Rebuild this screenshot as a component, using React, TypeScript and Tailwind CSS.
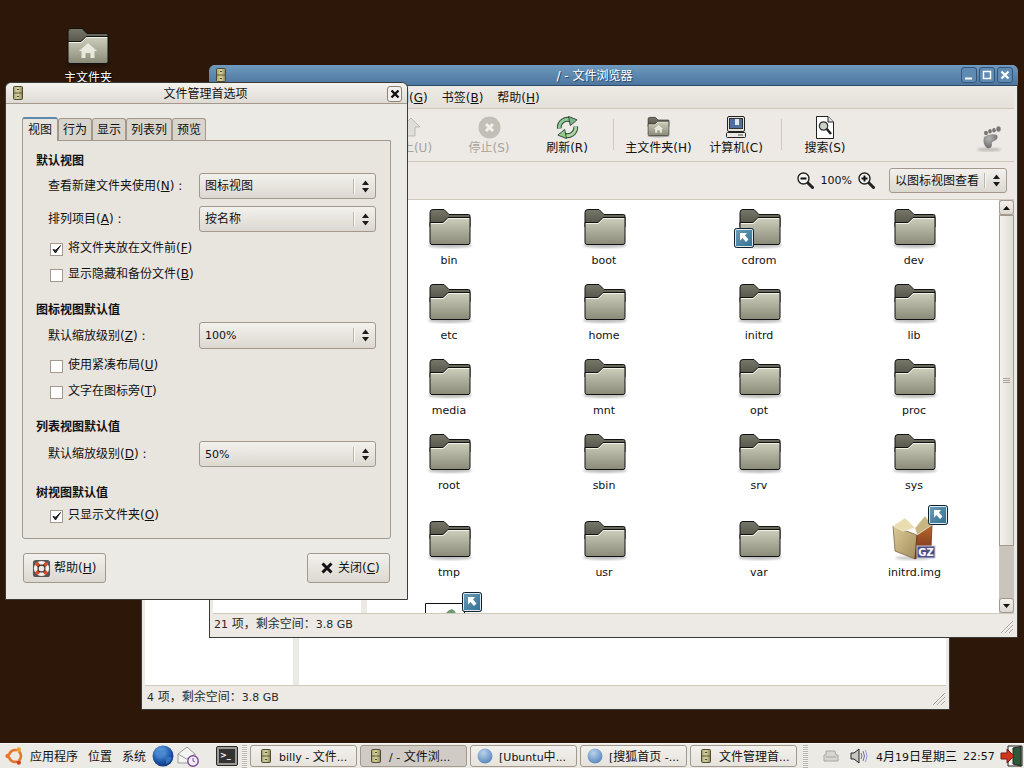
import type { ReactNode } from "react";

const btnFace = "bg-gradient-to-b from-[#f3f1ed] to-[#dcd8d1] border border-[#a2998c] rounded-[3px]";

function Mn({ t, k, colon }: { t: string; k: string; colon?: boolean }) {
  return (
    <span className="whitespace-nowrap">
      {t}(<u>{k}</u>){colon ? " :" : ""}
    </span>
  );
}

// latin runs are a touch smaller than the CJK ones in this theme
function L({ children }: { children: ReactNode }) {
  return <span className="text-[11px]">{children}</span>;
}

function Gradients() {
  return (
    <svg className="absolute w-0 h-0">
      <defs>
        <linearGradient id="folderFront" x1="0" y1="0" x2="0" y2="1">
          <stop offset="0" stopColor="#cfcfbd" />
          <stop offset="1" stopColor="#8a8a78" />
        </linearGradient>
        <linearGradient id="folderBack" x1="0" y1="0" x2="0" y2="1">
          <stop offset="0" stopColor="#77776a" />
          <stop offset="1" stopColor="#4e4e42" />
        </linearGradient>
        <linearGradient id="badge" x1="0" y1="0" x2="1" y2="1">
          <stop offset="0" stopColor="#6ea0bc" />
          <stop offset="1" stopColor="#2f6d8f" />
        </linearGradient>
        <linearGradient id="drawer" x1="0" y1="0" x2="1" y2="0">
          <stop offset="0" stopColor="#a8a46c" />
          <stop offset="0.5" stopColor="#d8d4a0" />
          <stop offset="1" stopColor="#8a8654" />
        </linearGradient>
        <linearGradient id="boxLeft" x1="0" y1="0" x2="1" y2="1">
          <stop offset="0" stopColor="#dccb96" />
          <stop offset="1" stopColor="#a08c5c" />
        </linearGradient>
        <linearGradient id="boxRight" x1="0" y1="0" x2="0" y2="1">
          <stop offset="0" stopColor="#b8682a" />
          <stop offset="1" stopColor="#6e2a18" />
        </linearGradient>
        <radialGradient id="globe" cx="0.4" cy="0.3" r="0.8">
          <stop offset="0" stopColor="#6fb0ea" />
          <stop offset="0.6" stopColor="#1d55a8" />
          <stop offset="1" stopColor="#0c2a66" />
        </radialGradient>
        <radialGradient id="globeSoft" cx="0.4" cy="0.3" r="0.8">
          <stop offset="0" stopColor="#b9d2ec" />
          <stop offset="1" stopColor="#4f7fb6" />
        </radialGradient>
        <radialGradient id="foot" cx="0.4" cy="0.3" r="0.9">
          <stop offset="0" stopColor="#b5b5b5" />
          <stop offset="1" stopColor="#555555" />
        </radialGradient>
        <filter id="soft">
          <feGaussianBlur stdDeviation="1.2" />
        </filter>
      </defs>
    </svg>
  );
}

function FolderIcon({ className, home }: { className: string; home?: boolean }) {
  return (
    <svg viewBox="0 0 48 42" className={className}>
      <ellipse cx="24" cy="38.5" rx="22" ry="2.5" fill="#000" opacity="0.25" filter="url(#soft)" />
      <path d="M4 5.5Q4 2.5 7 2.5H18L23 7.5H42.5Q44 7.5 44 9V20H4Z" fill="url(#folderBack)" stroke="#111" strokeWidth="1" />
      <path d="M4 15.5L17 15.5L22 10.5H44V35.5Q44 37.5 42 37.5H6Q4 37.5 4 35.5Z" fill="url(#folderFront)" stroke="#111" strokeWidth="1" />
      <path d="M5 16.5L17.5 16.5L22.5 11.5H43" fill="none" stroke="#f2f2e6" strokeWidth="1" />
      {home && <path d="M24 17L33 25H30.5V32H26.5V27H21.5V32H17.5V25H15Z" fill="#e8e8dc" />}
    </svg>
  );
}

function ShortcutBadge({ className }: { className: string }) {
  return (
    <svg viewBox="0 0 20 20" className={className}>
      <rect x="0.5" y="0.5" width="19" height="19" rx="2" fill="url(#badge)" stroke="#10202c" />
      <rect x="1.5" y="1.5" width="17" height="17" rx="1" fill="none" stroke="#dfeaf0" />
      <path d="M6 5H13L11 7.5L14.5 11.5L12 14L8.5 10L6 12.5Z" fill="#fff" />
    </svg>
  );
}

function PackageIcon() {
  return (
    <svg viewBox="0 0 48 46" className="w-12 h-[46px]">
      <ellipse cx="22" cy="43" rx="18" ry="2" fill="#000" opacity="0.2" filter="url(#soft)" />
      <path d="M2 11L26 20L24 44L4 36Z" fill="url(#boxLeft)" stroke="#6e5c38" strokeWidth="0.7" />
      <path d="M26 20L41 10L40 34L24 44Z" fill="url(#boxRight)" stroke="#5c2a18" strokeWidth="0.7" />
      <path d="M2 11L14 3L24 13L12 16Z" fill="#e8dcb0" stroke="#f6f0dc" strokeWidth="0.8" />
      <path d="M24 13L34 1L41 10L26 20Z" fill="#c8b682" stroke="#f0e8cc" strokeWidth="0.8" />
      <rect x="26" y="31" width="18" height="12" fill="#4f4f86" stroke="#c8c8dc" strokeWidth="1" />
      <text x="35" y="41" textAnchor="middle" fontSize="10" fontWeight="700" fill="#fff" fontFamily="DejaVu Sans">GZ</text>
    </svg>
  );
}

function DocIcon() {
  return (
    <svg viewBox="0 0 48 36" className="w-12 h-9">
      <path d="M2.5 1.5H41.5V36H2.5Z" fill="#fff" stroke="#111" />
      <path d="M22 13Q24 8 29 7Q33 9 33 13L30 15L30 22H26L26 16Z" fill="#6f9a6f" />
    </svg>
  );
}

function DrawerIcon({ className }: { className: string }) {
  return (
    <svg viewBox="0 0 10 14" className={className}>
      <rect x="0.5" y="0.5" width="9" height="13" rx="1" fill="url(#drawer)" stroke="#4c4a34" />
      <path d="M1 7H9" stroke="#5c5a3e" />
      <path d="M4 3.5H6M4 10.5H6" stroke="#4c4a34" />
    </svg>
  );
}

function ArrowsIcon() {
  return (
    <svg viewBox="0 0 7 13" className="w-[7px] h-[13px]">
      <path d="M3.5 0.5L7 5H0Z M3.5 12.5L0 8H7Z" fill="#1c1c1c" />
    </svg>
  );
}

function Combo({ label, w, h }: { label: ReactNode; w: string; h: string }) {
  return (
    <div className={`${w} ${h} ${btnFace} flex items-center shrink-0`}>
      <span className="flex-1 whitespace-nowrap pl-[5px]">{label}</span>
      <span className="h-[15px] w-px bg-[#bcb6ac] border-r border-[#faf9f6] box-content" />
      <span className="w-[20px] flex justify-center"><ArrowsIcon /></span>
    </div>
  );
}

function Check({ on, mt, children }: { on?: boolean; mt: string; children: ReactNode }) {
  return (
    <div className={`flex items-center h-4 pl-[14px] ${mt}`}>
      <span className="w-[13px] h-[13px] bg-white border border-[#a2998c] flex items-center justify-center shrink-0">
        {on && (
          <svg viewBox="0 0 11 11" className="w-[11px] h-[11px]">
            <path d="M2 5.5L4.5 9L9.5 1.5L4.8 6.2Z" fill="#222" stroke="#222" strokeWidth="1" />
          </svg>
        )}
      </span>
      <span className="ml-[5px] pb-[2px]">{children}</span>
    </div>
  );
}

function FormRow({ mt, label, value, h }: { mt: string; label: ReactNode; value: ReactNode; h: string }) {
  return (
    <div className={`flex items-center ${mt}`}>
      <span className="w-[163px] pl-[12px] shrink-0">{label}</span>
      <Combo label={value} w="w-[177px]" h={h} />
    </div>
  );
}

function PrefsDialog() {
  const tabs = [
    { t: "行为", w: "w-[34px]" },
    { t: "显示", w: "w-[34px]" },
    { t: "列表列", w: "w-[46px]" },
    { t: "预览", w: "w-[34px]" },
  ];
  return (
    <div className="absolute left-[5px] top-[82px] w-[403px] h-[518px] bg-[#eceae5] border border-[#3a3a36] rounded-t-[6px] flex flex-col">
      <div className="h-[21px] shrink-0 relative flex items-center justify-center rounded-t-[6px] bg-gradient-to-b from-[#f4f2ee] to-[#dfdbd4] border-b border-[#a2998c]">
        <DrawerIcon className="absolute left-[7px] top-[3px] w-[10px] h-[14px]" />
        <span className="pt-[2px] mr-[2px]">文件管理首选项</span>
        <span className="absolute right-[5px] top-[3px] w-[15px] h-[16px] rounded-[3px] border border-[#8a8275] bg-[#f2f0ec] flex items-center justify-center">
          <svg viewBox="0 0 10 10" className="w-[10px] h-[10px]">
            <path d="M1.5 1.5L8.5 8.5M8.5 1.5L1.5 8.5" stroke="#111" strokeWidth="2.4" />
          </svg>
        </span>
      </div>
      <div className="mt-[12px] ml-[16px] flex items-end h-[24px] relative z-10">
        <span className="w-[36px] h-[24px] -mb-px bg-[#e8e4de] border-x border-[#a2998c] border-t-2 border-t-[#5f88ad] rounded-t-[3px] flex items-center justify-center">视图</span>
        {tabs.map((x) => (
          <span key={x.t} className={`${x.w} h-[22px] bg-[#d9d4cc] border border-b-0 border-[#a2998c] rounded-t-[3px] flex items-center justify-center`}>{x.t}</span>
        ))}
      </div>
      <div className="ml-[16px] w-[369px] h-[399px] bg-[#e8e4de] border border-[#a2998c] rounded-b-[3px] shrink-0 pl-[13px] pr-[14px]">
        <h3 className="h-4 mt-[12px] font-bold leading-4">默认视图</h3>
        <FormRow mt="mt-[4px]" h="h-[26px]" value="图标视图" label={<Mn t="查看新建文件夹使用" k="N" colon />} />
        <FormRow mt="mt-[7px]" h="h-[26px]" value="按名称" label={<Mn t="排列项目" k="A" colon />} />
        <Check on mt="mt-[9px]"><Mn t="将文件夹放在文件前" k="F" /></Check>
        <Check mt="mt-[10px]"><Mn t="显示隐藏和备份文件" k="B" /></Check>
        <h3 className="h-4 mt-[19px] font-bold leading-4">图标视图默认值</h3>
        <FormRow mt="mt-[4px]" h="h-[27px]" value={<L>100%</L>} label={<Mn t="默认缩放级别" k="Z" colon />} />
        <Check mt="mt-[9px]"><Mn t="使用紧凑布局" k="U" /></Check>
        <Check mt="mt-[10px]"><Mn t="文字在图标旁" k="T" /></Check>
        <h3 className="h-4 mt-[19px] font-bold leading-4">列表视图默认值</h3>
        <FormRow mt="mt-[6px]" h="h-[26px]" value={<L>50%</L>} label={<Mn t="默认缩放级别" k="D" colon />} />
        <h3 className="h-4 mt-[18px] font-bold leading-4">树视图默认值</h3>
        <Check on mt="mt-[7px]"><Mn t="只显示文件夹" k="O" /></Check>
      </div>
      <div className="mt-[14px] px-[17px] flex justify-between">
        <button className={`${btnFace} w-[83px] h-[30px] flex items-center pl-[8px] gap-[3px]`}>
          <svg viewBox="0 0 20 20" className="w-[19px] h-[19px]">
            <rect x="1" y="1" width="18" height="18" rx="3" fill="#555" />
            <circle cx="10" cy="10" r="8" fill="#f4f0ea" />
            <path d="M4.4 4.4L7.6 7.6M15.6 4.4L12.4 7.6M4.4 15.6L7.6 12.4M15.6 15.6L12.4 12.4" stroke="#d8482a" strokeWidth="4" />
            <circle cx="10" cy="10" r="3.6" fill="#e8e4de" stroke="#333" strokeWidth="1.2" />
          </svg>
          <Mn t="帮助" k="H" />
        </button>
        <button className={`${btnFace} w-[83px] h-[30px] flex items-center pl-[13px] gap-[5px]`}>
          <svg viewBox="0 0 12 12" className="w-3 h-3">
            <path d="M1.5 1.5L10.5 10.5M10.5 1.5L1.5 10.5" stroke="#111" strokeWidth="3" />
          </svg>
          <Mn t="关闭" k="C" />
        </button>
      </div>
    </div>
  );
}

function ToolItem({ icon, label, dim, w = "w-[78px]" }: { icon: ReactNode; label: ReactNode; dim?: boolean; w?: string }) {
  return (
    <div className={`${w} flex flex-col items-center shrink-0 pt-[6px] ${dim ? "text-[#a8a49c]" : ""}`}>
      <div className="h-[24px] flex items-center justify-center">{icon}</div>
      <div className="leading-4 mt-[1px] whitespace-nowrap">{label}</div>
    </div>
  );
}

function ZoomGlass({ plus, minus }: { plus?: boolean; minus?: boolean }) {
  return (
    <svg viewBox="0 0 17 17" className="w-[17px] h-[17px]">
      <path d="M10.5 10.5L15.5 15.5" stroke="#222" strokeWidth="3" strokeLinecap="round" />
      <circle cx="6.5" cy="6.5" r="5.5" fill="#f4f4f0" stroke="#222" strokeWidth="1.4" />
      {(plus || minus) && <path d="M3.5 6.5H9.5" stroke="#111" strokeWidth="2" />}
      {plus && <path d="M6.5 3.5V9.5" stroke="#111" strokeWidth="2" />}
    </svg>
  );
}

function ResizeGrip() {
  return (
    <svg viewBox="0 0 16 16" className="w-4 h-4">
      <path d="M3 15L15 3M7 15L15 7M11 15L15 11" stroke="#a8a298" strokeWidth="1" />
      <path d="M4 15L15 4M8 15L15 8M12 15L15 12" stroke="#fbfaf8" strokeWidth="1" />
    </svg>
  );
}

function WinButton({ children }: { children: ReactNode }) {
  return (
    <span className="w-[16px] h-[16px] rounded-[3px] border border-[#34567a] bg-[#5f8ab2] flex items-center justify-center">
      <svg viewBox="0 0 10 10" className="w-[10px] h-[10px]">{children}</svg>
    </span>
  );
}

const FILE_ROWS = [
  { h: "h-[74px]", items: [{ n: "bin" }, { n: "boot" }, { n: "cdrom", link: true }, { n: "dev" }] },
  { h: "h-[75px]", items: [{ n: "etc" }, { n: "home" }, { n: "initrd" }, { n: "lib" }] },
  { h: "h-[75px]", items: [{ n: "media" }, { n: "mnt" }, { n: "opt" }, { n: "proc" }] },
  { h: "h-[75px]", items: [{ n: "root" }, { n: "sbin" }, { n: "srv" }, { n: "sys" }] },
];

function FileCell({ n, link }: { n: string; link?: boolean }) {
  return (
    <div className="flex flex-col items-center justify-end pb-[5px]">
      <div className="relative w-12 h-[42px]">
        <FolderIcon className="w-12 h-[42px]" />
        {link && <ShortcutBadge className="absolute left-[-2px] top-[21px] w-5 h-5" />}
      </div>
      <div className="mt-[4px] h-4 leading-4 text-[11px] pr-[1px]">{n}</div>
    </div>
  );
}

function FileBrowser() {
  return (
    <div className="absolute left-[209px] top-[65px] w-[809px] h-[573px] bg-[#edeae5] border border-[#3a3a36] border-t-0 rounded-t-[6px] flex flex-col">
      <div className="h-[21px] -mx-px shrink-0 relative flex items-center justify-center rounded-t-[6px] bg-gradient-to-b from-[#6f9abf] to-[#4c769e] border-b border-[#2f4a66] text-white [text-shadow:1px_1px_0_#2d4a66]">
        <DrawerIcon className="absolute left-[7px] top-[3px] w-[10px] h-[14px]" />
        <span className="mr-[38px] pt-[2px]">/ - 文件浏览器</span>
        <div className="absolute right-[5px] top-[2px] flex gap-[2px]">
          <WinButton><path d="M1 8.5H8" stroke="#fff" strokeWidth="2" /></WinButton>
          <WinButton><rect x="1.5" y="1.5" width="7" height="7" fill="none" stroke="#fff" strokeWidth="1.5" /></WinButton>
          <WinButton><path d="M1.5 1.5L8.5 8.5M8.5 1.5L1.5 8.5" stroke="#fff" strokeWidth="2.2" /></WinButton>
        </div>
      </div>
      <div className="h-[23px] mx-[3px] shrink-0 flex items-center gap-[14px] pl-[172px] pt-[2px] bg-gradient-to-b from-[#edeae5] to-[#e4e0da] border-b border-[#cfc8bd]">
        <Mn t="转到" k="G" />
        <Mn t="书签" k="B" />
        <Mn t="帮助" k="H" />
      </div>
      <div className="h-[53px] mx-[3px] shrink-0 flex items-start pl-[159px] border-b border-[#cfc8bd] relative">
        <ToolItem dim label={<span>向上(U)</span>} icon={
          <svg viewBox="0 0 22 22" className="w-[22px] h-[22px]">
            <path d="M11 2L20 11H15V20H7V11H2Z" fill="#e0ded8" stroke="#bdb9b0" />
          </svg>
        } />
        <ToolItem dim label={<span>停止(S)</span>} icon={
          <svg viewBox="0 0 23 23" className="w-[23px] h-[23px]">
            <circle cx="11.5" cy="11.5" r="11" fill="#c2bfb9" />
            <path d="M8 8L15 15M15 8L8 15" stroke="#f2f0ec" strokeWidth="3" />
          </svg>
        } />
        <ToolItem label={<span>刷新(R)</span>} icon={
          <svg viewBox="0 0 24 24" className="w-[23px] h-[23px]">
            <path d="M3.5 13A8.5 8.5 0 0 1 16 4.5" fill="none" stroke="#2f4a36" strokeWidth="5" />
            <path d="M20.5 11A8.5 8.5 0 0 1 8 19.5" fill="none" stroke="#2f4a36" strokeWidth="5" />
            <path d="M3.5 13A8.5 8.5 0 0 1 16 4.5" fill="none" stroke="#8fc79a" strokeWidth="3" />
            <path d="M20.5 11A8.5 8.5 0 0 1 8 19.5" fill="none" stroke="#a9d6a0" strokeWidth="3" />
            <path d="M13 0.5L22 4L15 10Z" fill="#7cb888" stroke="#2f4a36" />
            <path d="M11 23.5L2 20L9 14Z" fill="#95c98c" stroke="#2f4a36" />
          </svg>
        } />
        <span className="w-px h-[31px] mt-[10px] ml-[7px] mr-[6px] bg-[#cfc8bd] shrink-0" />
        <ToolItem w="w-[77px]" label={<span>主文件夹(H)</span>} icon={<FolderIcon home className="w-[25px] h-[22px]" />} />
        <ToolItem label={<span>计算机(C)</span>} icon={
          <svg viewBox="0 0 20 22" className="w-[20px] h-[22px]">
            <rect x="1.5" y="0.5" width="17" height="15" rx="1.5" fill="#e4e2dc" stroke="#222" />
            <rect x="3.5" y="2.5" width="13" height="10" fill="#4f6f9c" stroke="#333" />
            <rect x="9" y="3" width="4" height="6" fill="#dfe6ef" />
            <rect x="0.5" y="16.5" width="19" height="5" rx="1" fill="#e9e7e1" stroke="#222" />
            <path d="M12 19H17" stroke="#555" />
          </svg>
        } />
        <span className="w-px h-[31px] mt-[10px] ml-[6px] mr-[6px] bg-[#cfc8bd] shrink-0" />
        <ToolItem w="w-[74px]" label={<span>搜索(S)</span>} icon={
          <svg viewBox="0 0 20 23" className="w-[20px] h-[23px]">
            <path d="M1.5 0.5H13L18.5 6V22.5H1.5Z" fill="#fff" stroke="#222" />
            <path d="M13 0.5V6H18.5" fill="#ddd" stroke="#222" />
            <path d="M11 12L16 18" stroke="#222" strokeWidth="2.5" />
            <circle cx="8.5" cy="10" r="4.2" fill="#c9d2c4" stroke="#333" strokeWidth="1.2" />
          </svg>
        } />
        <svg viewBox="0 0 28 26" className="absolute right-[10px] top-[17px] w-[28px] h-[26px]">
          <ellipse cx="13" cy="23.5" rx="12" ry="2" fill="#000" opacity="0.18" filter="url(#soft)" />
          <ellipse cx="10" cy="7" rx="2" ry="2.2" fill="#777" />
          <ellipse cx="14" cy="5.2" rx="1.8" ry="2.2" fill="#777" />
          <ellipse cx="18" cy="4.2" rx="1.8" ry="2.2" fill="#777" />
          <ellipse cx="22.5" cy="3" rx="2.2" ry="2.8" fill="#777" />
          <path d="M8 11Q14 7 21 9Q23 13 18 15Q15 16 16 19Q15 23 11 22Q6 18 8 11Z" fill="url(#foot)" />
        </svg>
      </div>
      <div className="h-[38px] mx-[3px] shrink-0 flex items-center justify-end pr-[7px] border-b border-[#cfc8bd]">
        <ZoomGlass minus />
        <span className="ml-[7px] text-[11px]">100%</span>
        <span className="ml-[6px]"><ZoomGlass plus /></span>
        <span className="ml-[14px]"><Combo label="以图标视图查看" w="w-[118px]" h="h-[25px]" /></span>
      </div>
      <div className="h-[413px] mx-[3px] shrink-0 flex">
        <div className="w-[148px] bg-white shrink-0" />
        <div className="w-[6px] shrink-0" />
        <div className="flex-1 bg-white overflow-hidden pl-[5px]">
          {FILE_ROWS.map((r, i) => (
            <div key={i} className={`grid grid-cols-[155px_155px_155px_155px] ${r.h}`}>
              {r.items.map((f) => <FileCell key={f.n} n={f.n} link={f.link} />)}
            </div>
          ))}
          <div className="grid grid-cols-[155px_155px_155px_155px] h-[87px]">
            <FileCell n="tmp" />
            <FileCell n="usr" />
            <FileCell n="var" />
            <div className="flex flex-col items-center justify-end pb-[5px]">
              <div className="relative w-12 h-[58px] flex items-end">
                <PackageIcon />
                <ShortcutBadge className="absolute left-[37px] top-[2px] w-5 h-5" />
              </div>
              <div className="mt-[4px] h-4 leading-4 text-[11px]">initrd.img</div>
            </div>
          </div>
          <div className="grid grid-cols-[155px_155px_155px_155px]">
            <div className="flex justify-center pt-[16px] pr-[6px] relative">
              <DocIcon />
              <ShortcutBadge className="absolute left-[90px] top-[6px] w-5 h-5" />
            </div>
          </div>
        </div>
        <div className="w-[15px] shrink-0 bg-[#cac5bc] flex flex-col">
          <div className={`h-[15px] ${btnFace} flex items-center justify-center`}>
            <svg viewBox="0 0 7 4" className="w-[7px] h-1"><path d="M3.5 0L7 4H0Z" fill="#111" /></svg>
          </div>
          <div className="h-[331px] bg-gradient-to-r from-[#f4f2ee] to-[#e0dcd5] border border-[#a2998c] flex flex-col items-center justify-center gap-px">
            <span className="w-[7px] h-px bg-[#a8a298]" />
            <span className="w-[7px] h-px bg-[#a8a298]" />
            <span className="w-[7px] h-px bg-[#a8a298]" />
          </div>
          <div className="flex-1" />
          <div className={`h-[15px] ${btnFace} flex items-center justify-center`}>
            <svg viewBox="0 0 7 4" className="w-[7px] h-1"><path d="M3.5 4L0 0H7Z" fill="#111" /></svg>
          </div>
        </div>
      </div>
      <div className="flex-1 mx-[3px] border-t border-[#cfc8bd] flex items-center justify-between pl-[1px] text-[#2a2a2a]">
        <span className="pb-[3px]"><L>21</L> 项，剩余空间：<L>3.8 GB</L></span>
        <ResizeGrip />
      </div>
    </div>
  );
}

function BackWindow() {
  return (
    <div className="absolute left-[141px] top-[300px] w-[809px] h-[410px] bg-[#edeae5] border border-[#3a3a36] border-t-0 flex flex-col px-[3px]">
      <div className="flex-1 flex">
        <div className="w-[148px] bg-white" />
        <div className="w-[6px]" />
        <div className="flex-1 bg-white" />
      </div>
      <div className="h-[24px] border-t border-[#cfc8bd] flex items-center justify-between pl-[2px] text-[#2a2a2a]">
        <span className="pb-[1px]"><L>4</L> 项，剩余空间：<L>3.8 GB</L></span>
        <ResizeGrip />
      </div>
    </div>
  );
}

function TaskButton({ label, icon, active }: { label: ReactNode; icon: ReactNode; active?: boolean }) {
  return (
    <div className={`w-[107px] h-[22px] shrink-0 rounded-[3px] border border-[#a2998c] flex items-center pl-[9px] whitespace-nowrap overflow-hidden ${active ? "bg-[#d0ccc5]" : "bg-gradient-to-b from-[#f3f1ed] to-[#e6e2dc]"}`}>
      <span className="w-[11px] flex justify-center shrink-0">{icon}</span>
      <span className="ml-[8px] pt-[2px]">{label}</span>
    </div>
  );
}

const grip = "w-[5px] h-[23px] shrink-0 bg-[repeating-linear-gradient(0deg,#b8b3ab_0_1px,#f7f5f1_1px_2px)]";

function Panel() {
  const drawer = <DrawerIcon className="w-[10px] h-[14px]" />;
  const globe = (
    <svg viewBox="0 0 16 16" className="w-[16px] h-[16px] shrink-0 -ml-[2px]"><circle cx="8" cy="8" r="7.5" fill="url(#globeSoft)" /></svg>
  );
  return (
    <div className="h-[25px] shrink-0 bg-[#eceae5] flex items-center pl-[5px] relative border-t border-[#f7f5f2]">
      <svg viewBox="0 0 20 20" className="w-[20px] h-[20px] shrink-0">
        <circle cx="10" cy="10" r="6" fill="none" stroke="#e8742c" strokeWidth="2.6" />
        <path d="M4 10H7M13 5L11.5 7.5M13 15L11.5 12.5" stroke="#eceae5" strokeWidth="1.6" />
        <circle cx="2.6" cy="10" r="2.2" fill="#e8742c" />
        <circle cx="13.8" cy="3.4" r="2.2" fill="#f0a020" />
        <circle cx="13.8" cy="16.6" r="2.2" fill="#d0401c" />
      </svg>
      <span className="ml-[5px] pt-[2px] whitespace-nowrap">应用程序</span>
      <span className="ml-[10px] pt-[2px] whitespace-nowrap">位置</span>
      <span className="ml-[10px] pt-[2px] whitespace-nowrap">系统</span>
      <svg viewBox="0 0 22 22" className="ml-[6px] w-[22px] h-[22px] shrink-0">
        <circle cx="11" cy="11" r="10.5" fill="url(#globe)" />
        <path d="M5 6Q10 3 13 6Q10 9 11 12Q6 11 5 6ZM14 13Q18 11 20 13Q18 18 14 19Z" fill="#3f7fca" opacity="0.7" />
      </svg>
      <svg viewBox="0 0 22 22" className="ml-[3px] w-[22px] h-[22px] shrink-0">
        <path d="M1 9L10 2L18 9V18H1Z" fill="#f4f4f2" stroke="#9a9a9a" />
        <path d="M1 9L9.5 14L18 9" fill="none" stroke="#9a9a9a" />
        <circle cx="16" cy="16" r="5.2" fill="#f4f0f8" stroke="#7a4a9a" strokeWidth="1.4" />
        <path d="M16 13V16L18 17" fill="none" stroke="#7a4a9a" />
      </svg>
      <span className="ml-[17px] w-[22px] h-[20px] shrink-0 rounded-[2px] bg-[#9a9a94] border border-[#2a2a2a] p-[2px] flex">
        <span className="flex-1 bg-[#333] text-[8px] leading-[14px] text-white pl-[1px] font-bold">&gt;_</span>
      </span>
      <span className={`ml-[4px] ${grip}`} />
      <div className="ml-[3px] flex gap-[3px]">
        <TaskButton label={<><L>billy - </L>文件<L>...</L></>} icon={drawer} />
        <TaskButton label={<><L>/ - </L>文件浏<L>...</L></>} icon={drawer} active />
        <TaskButton label={<><L>[Ubuntu</L>中<L>...</L></>} icon={globe} />
        <TaskButton label={<><L>[</L>搜狐首页<L> -...</L></>} icon={globe} />
        <TaskButton label={<>文件管理首<L>...</L></>} icon={drawer} />
      </div>
      <span className={`ml-[6px] ${grip}`} />
      <svg viewBox="0 0 16 12" className="ml-[15px] w-4 h-3 shrink-0">
        <path d="M3 1H12L13 5H15V11H1V5H3Z" fill="#d8d6d0" stroke="#a8a6a0" />
        <path d="M3 7H13" stroke="#a8a6a0" />
      </svg>
      <svg viewBox="0 0 19 16" className="ml-[11px] w-[19px] h-4 shrink-0">
        <path d="M1 5H4L9 1V15L4 11H1Z" fill="#c8c6c0" stroke="#222" />
        <path d="M11 5Q13 8 11 11M13 3Q16 8 13 13" fill="none" stroke="#6a6aa8" />
        <path d="M15.5 2Q18.5 8 15.5 14" fill="none" stroke="#9a9ac8" />
      </svg>
      <span className="ml-[7px] pt-[2px] whitespace-nowrap"><L>4</L>月<L>19</L>日星期三</span>
      <span className="ml-[6px] pt-[2px] whitespace-nowrap text-[11px]">22:57</span>
      <svg viewBox="0 0 23 22" className="ml-[5px] w-[23px] h-[22px] shrink-0">
        <path d="M8 1H22V21H8Z" fill="#f2f0ea" stroke="#222" />
        <path d="M13 3L21 1.5V21L13 19Z" fill="#2f5a3a" stroke="#222" />
        <path d="M1 8H7V4L14 11L7 18V14H1Z" fill="#d0341c" stroke="#7a1a10" />
      </svg>
    </div>
  );
}

export default function App() {
  return (
    <div className="w-[1024px] h-[768px] overflow-hidden flex flex-col bg-[#2c1709] text-[12px] leading-4 text-[#111] [font-family:'DejaVu_Sans','Noto_Sans_CJK_SC',sans-serif]">
      <Gradients />
      <div className="flex-1 relative">
        <div className="absolute left-[64px] top-[26px] w-[48px] flex flex-col items-center">
          <FolderIcon home className="w-12 h-[42px]" />
          <span className="mt-[2px] text-white whitespace-nowrap [text-shadow:1px_1px_0_#000]">主文件夹</span>
        </div>
        <BackWindow />
        <FileBrowser />
        <PrefsDialog />
      </div>
      <Panel />
    </div>
  );
}
